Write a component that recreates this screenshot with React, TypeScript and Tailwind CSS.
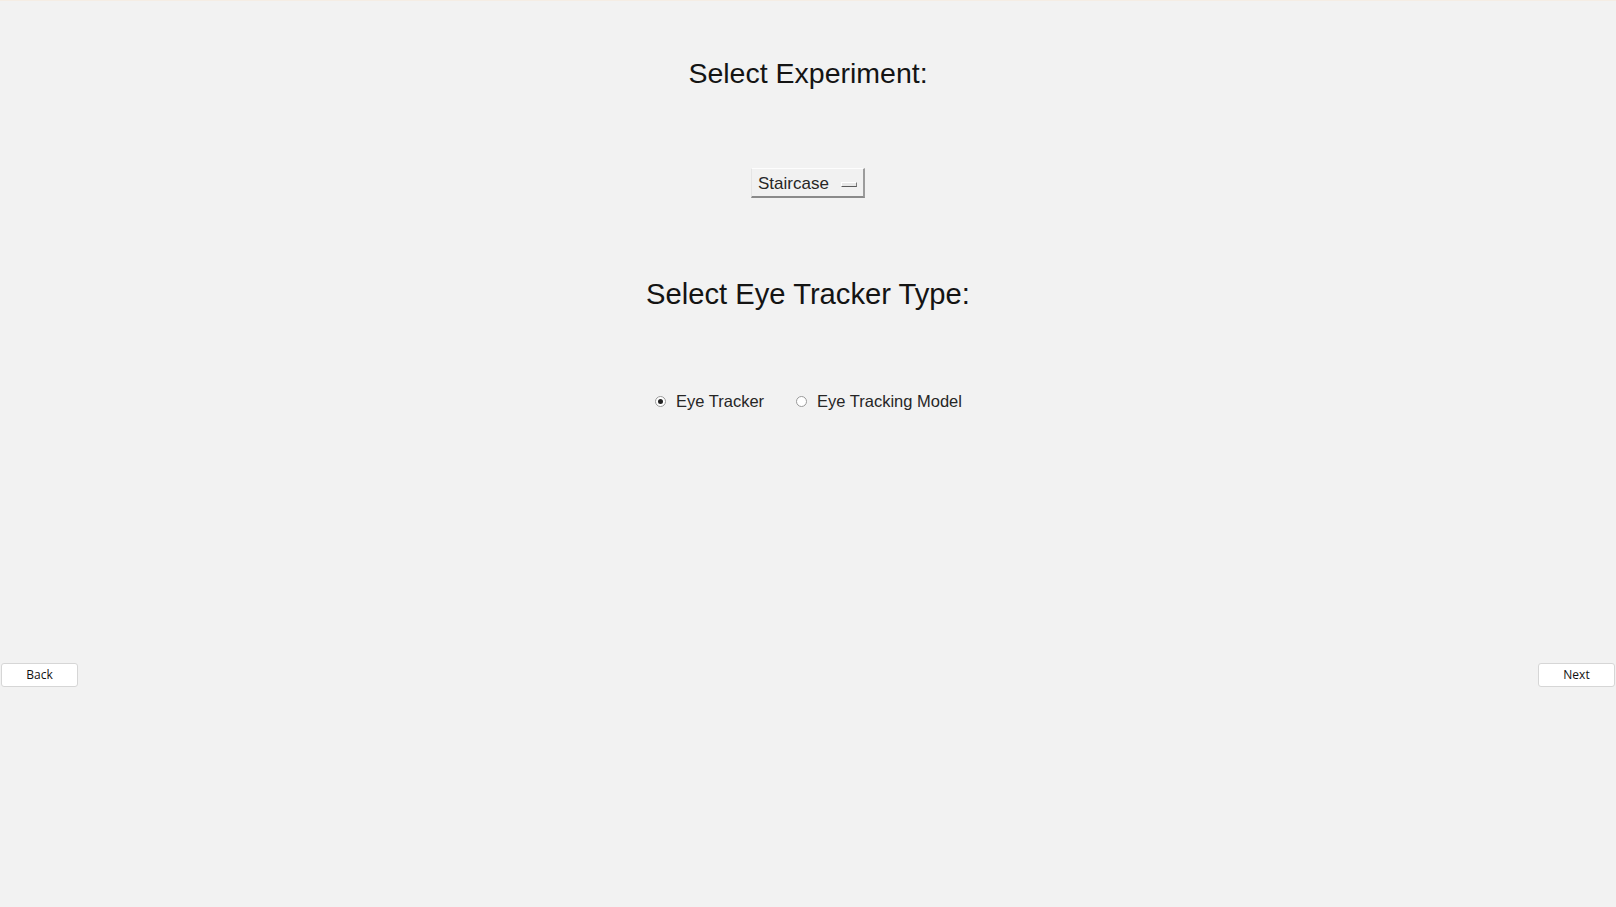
import React from "react";

function Radio({ checked, label }: { checked: boolean; label: string }) {
  return (
    <div className="flex items-center">
      <span className="relative flex h-[11px] w-[11px] items-center justify-center rounded-full border border-[#9a9a9a] bg-white">
        {checked && <span className="h-[5px] w-[5px] rounded-full bg-[#222]" />}
      </span>
      <span className="ml-[10px] text-[16.5px] leading-[24px] text-[#262626]">{label}</span>
    </div>
  );
}

export default function App() {
  return (
    <div
      className="flex h-[907px] w-full flex-col items-center overflow-hidden border-t border-[#f5ede4] bg-[#f2f2f2]"
      style={{ fontFamily: '"Liberation Sans", Arial, sans-serif' }}
    >
      <h1 className="mt-[56px] h-[32px] text-[28.5px] leading-[32px] text-[#141414]">Select Experiment:</h1>

      <div className="mt-[79px] flex h-[30px] w-[114px] items-center border-t border-l border-t-[#fdfdfd] border-l-[#e4e4e4] border-r-2 border-b-2 border-r-[#9c9c9c] border-b-[#8a8a8a] bg-[#f1f1f1] pl-[6px]">
        <span className="mt-[2px] text-[17px] leading-[20px] text-[#262626]">Staircase</span>
        <span className="ml-[12px] mt-[4px] h-[5px] w-[16px] border-t border-l border-r border-b border-t-[#ffffff] border-l-[#ffffff] border-r-[#7a7a7a] border-b-[#5a5a5a] bg-[#e8e8e8]" />
      </div>

      <h1 className="mt-[80px] h-[32px] text-[29.2px] leading-[32px] text-[#141414]">Select Eye Tracker Type:</h1>

      <div className="mt-[79px] flex h-[24px] items-center gap-[32px] pl-[1px]">
        <Radio checked label="Eye Tracker" />
        <Radio checked={false} label="Eye Tracking Model" />
      </div>

      <div className="mt-[250px] flex w-full justify-between px-[1px]">
        <button
          className="h-[24px] w-[77px] rounded-[3px] border border-[#d6d6d6] bg-white text-[12px] text-[#111]"
          style={{ fontFamily: '"Open Sans", "Noto Sans", sans-serif' }}
        >
          Back
        </button>
        <button
          className="h-[24px] w-[77px] rounded-[3px] border border-[#d6d6d6] bg-white text-[12px] text-[#111]"
          style={{ fontFamily: '"Open Sans", "Noto Sans", sans-serif' }}
        >
          Next
        </button>
      </div>
    </div>
  );
}
